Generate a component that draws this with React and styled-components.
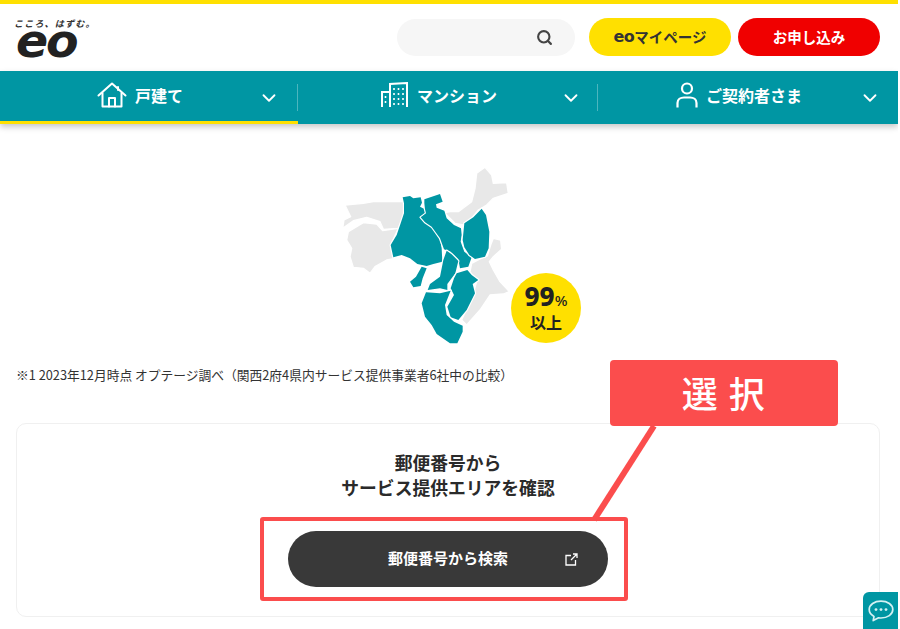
import React from 'react'
import styled, {createGlobalStyle} from 'styled-components'
import {ChevronDown, Search} from 'lucide-react'

const GlobalStyle = createGlobalStyle`
    html, body {
        margin: 0;
        padding: 0;
        background: #fff;
        overflow: hidden;
    }
    body {
        font-family: "Noto Sans CJK JP", "Noto Sans", sans-serif;
        color: #333;
    }
`

const Page = styled.div`
    position: relative;
    width: 898px;
    height: 629px;
    overflow: hidden;
    border-top: 4px solid #ffe000;
    box-sizing: border-box;
`

const Header = styled.header`
    display: flex;
    align-items: center;
    height: 67px;
    padding: 0 18px 1px 14px;
    box-sizing: border-box;
`

const Logo = styled.div`
    display: flex;
    flex-flow: column;
    width: 80px;
    margin-top: 3px;
`

const LogoTag = styled.span`
    font-size: 9px;
    line-height: 10px;
    font-weight: 700;
    font-style: italic;
    letter-spacing: 1.2px;
    color: #333;
    white-space: nowrap;
`

const LogoMark = styled.span`
    display: block;
    height: 30px;
    margin-left: 2px;
    font-family: "DejaVu Sans", sans-serif;
    font-size: 46px;
    line-height: 24px;
    font-weight: 700;
    font-style: italic;
    color: #222;
    letter-spacing: -2px;
    transform-origin: left center;
    transform: scaleX(1.03);
`

const SearchBox = styled.div`
    display: flex;
    align-items: center;
    justify-content: flex-end;
    width: 178px;
    height: 37px;
    margin-left: auto;
    padding-right: 22px;
    box-sizing: border-box;
    border-radius: 19px;
    background: #f6f6f6;
    color: #444;
`

const HeaderBtn = styled.div`
    display: flex;
    align-items: center;
    justify-content: center;
    width: 142px;
    height: 38px;
    margin-left: ${props => props.$gap}px;
    padding-bottom: 2px;
    box-sizing: border-box;
    border-radius: 19px;
    font-size: 14.5px;
    font-weight: 700;
    background: ${props => props.$bg};
    color: ${props => props.$fg};
`

const EoWord = styled.span`
    font-family: "DejaVu Sans", sans-serif;
    font-size: 16px;
    letter-spacing: -0.5px;
`

const Nav = styled.nav`
    display: flex;
    height: 53px;
    background: #0096a3;
    box-shadow: 0 3px 6px rgba(0, 0, 0, 0.22);
`

const NavItem = styled.div`
    position: relative;
    display: flex;
    align-items: center;
    justify-content: center;
    gap: 8px;
    width: ${props => props.$width}px;
    height: 53px;
    padding: 0 18px 3px 0;
    box-sizing: border-box;
    color: #fff;
    font-size: 16px;
    font-weight: 700;
    border-bottom: 3px solid ${props => props.$active ? '#ffe000' : 'transparent'};
    svg { flex: none; }
`

const NavChevron = styled.span`
    position: absolute;
    right: ${props => props.$right}px;
    top: 16px;
    display: flex;
`

const NavDivider = styled.span`
    position: absolute;
    right: 0;
    top: 13px;
    width: 1px;
    height: 27px;
    background: rgba(255, 255, 255, 0.3);
`

const Main = styled.main`
    display: flex;
    flex-flow: column;
    padding: 36px 18px 0 16px;
`

const MapWrap = styled.div`
    position: relative;
    width: 260px;
    height: 190px;
    margin-left: 314px;
`

const Badge = styled.div`
    position: absolute;
    left: 181px;
    top: 113px;
    display: flex;
    flex-flow: column;
    align-items: center;
    justify-content: center;
    width: 70px;
    height: 70px;
    border-radius: 50%;
    background: #ffe000;
    color: #222;
    font-weight: 700;
`

const BadgeNum = styled.div`
    font-size: 26px;
    line-height: 25px;
    margin-top: -1px;
    font-family: "Noto Sans", sans-serif;
    font-weight: 800;
    span {
        font-size: 15px;
        font-weight: 500;
    }
`

const BadgeSub = styled.div`
    font-size: 16px;
    line-height: 19px;
`

const Note = styled.p`
    margin: 16px 0 0;
    font-size: 12.75px;
    line-height: 18px;
    color: #333;
    white-space: nowrap;
`

const Card = styled.section`
    display: flex;
    flex-flow: column;
    align-items: center;
    width: 864px;
    height: 194px;
    margin-top: 39px;
    padding-top: 26px;
    box-sizing: border-box;
    border: 1px solid #f0f0f0;
    border-radius: 10px;
`

const CardTitle = styled.h2`
    margin: 0;
    font-size: 17.8px;
    line-height: 25px;
    font-weight: 700;
    text-align: center;
    color: #2a2a2a;
`

const SearchBtn = styled.div`
    position: relative;
    display: flex;
    align-items: center;
    justify-content: center;
    width: 320px;
    height: 56px;
    margin-top: 31px;
    padding-bottom: 3px;
    box-sizing: border-box;
    border-radius: 28px;
    background: #393939;
    color: #fff;
    font-size: 15px;
    font-weight: 700;
    svg {
        position: absolute;
        right: 30px;
        top: 22px;
    }
`

const Callout = styled.div`
    position: absolute;
    left: 610px;
    top: 356px;
    display: flex;
    align-items: center;
    justify-content: center;
    width: 228px;
    height: 66px;
    padding-bottom: 3px;
    box-sizing: border-box;
    border-radius: 4px;
    background: #fb4d4d;
    color: #fff;
    font-size: 36px;
    font-weight: 500;
    letter-spacing: 1.5px;
    white-space: pre;
`

const Highlight = styled.div`
    position: absolute;
    left: 260px;
    top: 513px;
    width: 368px;
    height: 84px;
    box-sizing: border-box;
    border: 4px solid #fb4d4d;
    border-radius: 3px;
`

const Leader = styled.svg`
    position: absolute;
    left: 590px;
    top: 420px;
`

const ChatTab = styled.div`
    position: absolute;
    left: 863px;
    top: 588px;
    display: flex;
    align-items: center;
    justify-content: center;
    width: 36px;
    height: 37px;
    border-radius: 6px 0 0 0;
    background: #0096a3;
`

const HouseIcon = () => (
    <svg width="30" height="26" viewBox="0 0 30 26" fill="none" stroke="#fff" strokeWidth="2" strokeLinejoin="round" strokeLinecap="round">
        <path d="M1.5 13.5 L15 1.5 L28.5 13.5" />
        <path d="M5.5 11 V24.5 H24.5 V11" />
        <path d="M12 24.5 V16 H18 V24.5" />
        <path d="M21 5 V8" />
    </svg>
)

const BuildingIcon = () => (
    <svg width="28" height="26" viewBox="0 0 28 26" fill="none" stroke="#fff" strokeWidth="2">
        <path d="M1 25 V10 H9" />
        <path d="M9 25 V2 L26 1 V25" />
        <path d="M4.5 14 v2 M4.5 19 v2 M13 6 v2 M17.5 6 v2 M22 6 v2 M13 11 v2 M17.5 11 v2 M22 11 v2 M13 16 v2 M17.5 16 v2 M22 16 v2 M13 21 v2 M17.5 21 v2 M22 21 v2" strokeWidth="1.6" />
    </svg>
)

const UserIcon = () => (
    <svg width="22" height="26" viewBox="0 0 22 26" fill="none" stroke="#fff" strokeWidth="2.2">
        <circle cx="11" cy="6.5" r="5" />
        <path d="M1.5 25.5 V21 C1.5 17.5 4.5 15.5 8 15.5 H14 C17.5 15.5 20.5 17.5 20.5 21 V25.5" />
    </svg>
)

const ExternalIcon = () => (
    <svg width="13" height="13" viewBox="0 0 13 13" fill="none" stroke="#fff" strokeWidth="1.3">
        <path d="M6 2.5 H1 V12 H10.5 V7" />
        <path d="M6 7 L12 1 M8 1 H12 V5" />
    </svg>
)

const ChatIcon = () => (
    <svg width="26" height="22" viewBox="0 0 26 22" fill="none">
        <path d="M13 1.2 C6.5 1.2 1.2 4.6 1.2 9.6 C1.2 12.6 3.2 15 6 16.4 L5.2 20.6 L10.6 17.8 C11.4 17.9 12.2 18 13 18 C19.5 18 24.8 14.6 24.8 9.6 C24.8 4.6 19.5 1.2 13 1.2 Z" stroke="#d5f1f3" strokeWidth="1.7" strokeLinejoin="round" />
        <circle cx="8" cy="9.6" r="1.4" fill="#d5f1f3" />
        <circle cx="13" cy="9.6" r="1.4" fill="#d5f1f3" />
        <circle cx="18" cy="9.6" r="1.4" fill="#d5f1f3" />
    </svg>
)

const GRAY_REGIONS = [
    'M45,135 L100,130 L130,125 L225,125 L222,165 L205,205 L160,208 L150,185 L110,172 L70,182 L38,205 L42,180 L62,170 Z',
    'M55,215 L100,188 L140,192 L158,212 L205,205 L182,255 L195,295 L170,300 L135,320 L120,340 L100,325 L70,322 L60,290 L65,265 L50,240 Z',
    'M335,160 L360,155 L385,155 L425,125 L435,85 L440,40 L465,22 L485,45 L490,70 L530,68 L535,100 L490,115 L470,135 L445,150 L425,175 L400,195 L375,190 L350,165 Z',
    'M490,235 L512,240 L515,268 L490,290 L478,305 L490,330 L510,365 L538,395 L520,402 L480,405 L450,450 L410,495 L395,480 L430,400 L440,365 L420,335 L425,310 L450,297 L472,288 L482,255 Z',
]

const TEAL_REGIONS = [
    'M218,112 L240,108 L250,115 L272,112 L276,128 L270,140 L285,148 L288,160 L272,172 L285,187 L305,200 L318,218 L330,235 L335,265 L337,305 L310,312 L290,318 L262,312 L240,295 L215,285 L190,292 L182,255 L200,225 L212,190 L222,160 L222,130 Z',
    'M283,118 L330,102 L338,125 L318,133 L320,143 L343,152 L350,175 L372,195 L393,205 L395,225 L392,245 L403,275 L425,292 L415,320 L390,325 L385,298 L362,275 L342,268 L330,235 L318,218 L305,200 L285,187 L272,172 L288,160 L285,148 L283,130 Z',
    'M455,146 L468,165 L478,215 L476,265 L465,290 L435,297 L418,285 L403,262 L398,240 L403,190 L430,172 Z',
    'M350,272 L365,283 L385,303 L376,340 L352,372 L352,390 L330,385 L293,390 L300,372 L330,350 L340,300 Z',
    'M380,340 L412,330 L425,345 L445,360 L428,372 L435,400 L410,450 L385,480 L362,472 L352,440 L372,405 L362,385 L372,355 Z',
    'M288,397 L330,400 L362,392 L345,435 L350,465 L372,485 L398,497 L398,515 L382,550 L360,550 L320,522 L305,495 L285,470 L275,430 Z',
    'M275,320 L290,325 L278,355 L272,378 L250,382 L240,365 L258,350 Z',
]

const KansaiMap = () => (
    <svg width="260" height="190" viewBox="0 0 780 570">
        {GRAY_REGIONS.map((d, i) => <path key={i} d={d} fill="#e8e8e8" stroke="#fff" strokeWidth="4" strokeLinejoin="round" />)}
        {TEAL_REGIONS.map((d, i) => <path key={i} d={d} fill="#0096a3" stroke="#fff" strokeWidth="7" strokeLinejoin="round" paintOrder="stroke" />)}
    </svg>
)

const NAV_ITEMS = [
    {label: '戸建て', icon: <HouseIcon />, width: 298, active: true, right: 18, divider: true},
    {label: 'マンション', icon: <BuildingIcon />, width: 300, active: false, right: 16, divider: true},
    {label: 'ご契約者さま', icon: <UserIcon />, width: 300, active: false, right: 17, divider: false},
]

const App = () => (
    <Page>
        <GlobalStyle />
        <Header>
            <Logo>
                <LogoTag>こころ、はずむ。</LogoTag>
                <LogoMark>eo</LogoMark>
            </Logo>
            <SearchBox><Search size={17} strokeWidth={3} /></SearchBox>
            <HeaderBtn $gap={14} $bg="#ffe000" $fg="#333"><EoWord>eo</EoWord>マイページ</HeaderBtn>
            <HeaderBtn $gap={7} $bg="#f00000" $fg="#fff">お申し込み</HeaderBtn>
        </Header>
        <Nav>
            {NAV_ITEMS.map(item => (
                <NavItem key={item.label} $width={item.width} $active={item.active}>
                    {item.icon}
                    {item.label}
                    <NavChevron $right={item.right}><ChevronDown size={22} strokeWidth={2} /></NavChevron>
                    {item.divider && <NavDivider />}
                </NavItem>
            ))}
        </Nav>
        <Main>
            <MapWrap>
                <KansaiMap />
                <Badge>
                    <BadgeNum>99<span>%</span></BadgeNum>
                    <BadgeSub>以上</BadgeSub>
                </Badge>
            </MapWrap>
            <Note>※1 2023年12月時点 オプテージ調べ（関西2府4県内サービス提供事業者6社中の比較）</Note>
            <Card>
                <CardTitle>郵便番号から<br />サービス提供エリアを確認</CardTitle>
                <SearchBtn>郵便番号から検索<ExternalIcon /></SearchBtn>
            </Card>
        </Main>
        <Leader width="70" height="100" viewBox="0 0 70 100">
            <line x1="64" y1="2" x2="4" y2="96" stroke="#fb4d4d" strokeWidth="6" />
        </Leader>
        <Callout>選 択</Callout>
        <Highlight />
        <ChatTab><ChatIcon /></ChatTab>
    </Page>
)

export default App
